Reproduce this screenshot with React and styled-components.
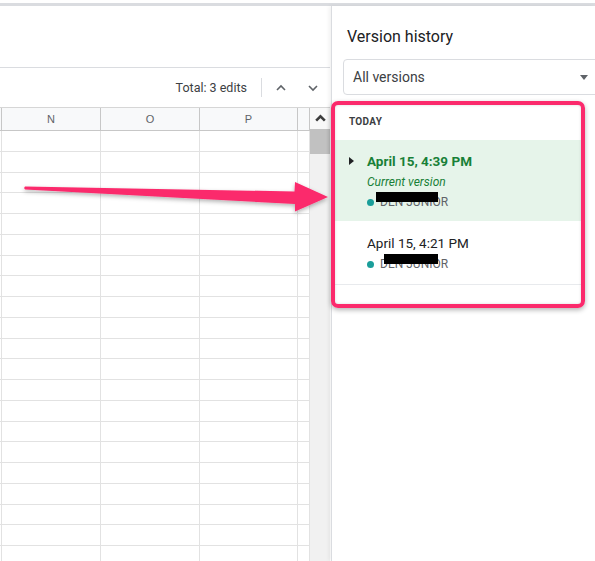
import React from 'react';
import styled, { createGlobalStyle } from 'styled-components';

const GlobalStyle = createGlobalStyle`
  html, body {
    margin: 0;
    padding: 0;
    background: #ffffff;
    font-family: Roboto, "Liberation Sans", Arial, sans-serif;
  }
  * { box-sizing: border-box; }
`;

const versions = [
  { id: 1, date: 'April 15, 4:39 PM', current: true, author: 'DEN JUNIOR', mask: { left: -4, width: 62 } },
  { id: 2, date: 'April 15, 4:21 PM', current: false, author: 'DEN JUNIOR', mask: { left: 4, width: 54 } },
];

const columns = ['', 'N', 'O', 'P', ''];
const ROWS = 21;

const ChevronUp = ({ size = 12, color = '#5f6368', width = 1.6 }) => (
  <svg width={size} height={size} viewBox="0 0 12 12">
    <path d="M2 8 L6 4 L10 8" fill="none" stroke={color} strokeWidth={width} />
  </svg>
);

const ChevronDown = () => (
  <svg width="12" height="12" viewBox="0 0 12 12">
    <path d="M2 4 L6 8 L10 4" fill="none" stroke="#5f6368" strokeWidth="1.6" />
  </svg>
);

const App = () => {
  return (
    <Page>
      <GlobalStyle />
      <TopLine />
      <Main>
        <Sheet>
          <Blank />
          <Toolbar>
            <EditCount>Total: 3 edits</EditCount>
            <Separator />
            <NavButton><ChevronUp /></NavButton>
            <NavButton><ChevronDown /></NavButton>
          </Toolbar>
          <GridArea>
            <Grid>
              {columns.map((c, i) => (
                <HeaderCell key={`h${i}`}>{c}</HeaderCell>
              ))}
              {Array.from({ length: ROWS }).map((_, r) =>
                columns.map((_, i) => <Cell key={`${r}-${i}`} />)
              )}
            </Grid>
            <ScrollTrack>
              <ScrollArrow><ChevronUp size={13} color="#3c3c3c" width={2.4} /></ScrollArrow>
              <ScrollThumb />
            </ScrollTrack>
          </GridArea>
        </Sheet>

        <Panel>
          <Title>Version history</Title>
          <Select>
            <span>All versions</span>
            <Caret />
          </Select>
          <List>
            <DayLabel>TODAY</DayLabel>
            {versions.map(v => (
              <Item key={v.id} $current={v.current}>
                {v.current && <Expander />}
                <DateText $current={v.current}>{v.date}</DateText>
                {v.current && <CurrentTag>Current version</CurrentTag>}
                <Author>
                  <Dot />
                  <AuthorName>
                    {v.author}
                    <Redaction style={{ left: v.mask.left, width: v.mask.width }} />
                  </AuthorName>
                </Author>
              </Item>
            ))}
          </List>
        </Panel>
      </Main>

      <Highlight />
      <Arrow width="595" height="561" viewBox="0 0 595 561">
        <defs>
          <filter id="sh" x="-10%" y="-50%" width="120%" height="200%">
            <feDropShadow dx="0" dy="2" stdDeviation="2" floodColor="#000" floodOpacity="0.3" />
          </filter>
        </defs>
        <path
          d="M25 186.5 Q23.5 188 25 189.5 L295 204 L295 211.5 L328 197 L295 182 L294.5 191.5 Z"
          fill="#fb2a6c"
          filter="url(#sh)"
        />
      </Arrow>
    </Page>
  );
};

const Page = styled.div`
  position: relative;
  width: 595px;
  height: 561px;
  overflow: hidden;
  display: flex;
  flex-direction: column;
  background: #ffffff;
`;

const TopLine = styled.div`
  height: 6px;
  border-top: 3px solid #ffffff;
  background: #dadce0;
  flex-shrink: 0;
`;

const Main = styled.div`
  flex: 1;
  display: flex;
  min-height: 0;
`;

const Sheet = styled.div`
  width: 331px;
  flex-shrink: 0;
  display: flex;
  flex-direction: column;
  padding-right: 1px;
`;

const Blank = styled.div`
  height: 62px;
  border-bottom: 1px solid #dadce0;
  flex-shrink: 0;
`;

const Toolbar = styled.div`
  height: 40px;
  flex-shrink: 0;
  display: flex;
  align-items: center;
  justify-content: flex-end;
  padding-right: 1px;
  border-bottom: 1px solid #d6d6d6;
`;

const EditCount = styled.span`
  font-size: 12.5px;
  color: #3c4043;
  margin-right: 14px;
`;

const Separator = styled.div`
  width: 1px;
  height: 19px;
  background: #dadce0;
  margin-right: 3px;
`;

const NavButton = styled.div`
  width: 32px;
  height: 28px;
  display: flex;
  align-items: center;
  justify-content: center;
`;

const GridArea = styled.div`
  flex: 1;
  display: flex;
  min-height: 0;
  overflow: hidden;
`;

const Grid = styled.div`
  width: 310px;
  display: grid;
  grid-template-columns: 2px 99px 99px 98px 12px;
  grid-auto-rows: 20.75px;
  grid-template-rows: 23px;
  align-content: start;
`;

const HeaderCell = styled.div`
  background: #f8f9fa;
  border-right: 1px solid #c7c7c7;
  border-bottom: 1px solid #c7c7c7;
  display: flex;
  align-items: center;
  justify-content: center;
  font-family: "Liberation Sans", Arial, sans-serif;
  font-size: 11px;
  color: #5f6368;
`;

const Cell = styled.div`
  border-right: 1px solid #e2e2e2;
  border-bottom: 1px solid #e2e2e2;
`;

const ScrollTrack = styled.div`
  width: 20px;
  background: #f1f1f1;
  display: flex;
  flex-direction: column;
`;

const ScrollArrow = styled.div`
  height: 21px;
  display: flex;
  align-items: center;
  justify-content: center;
  background: #f8f8f8;
`;

const ScrollThumb = styled.div`
  height: 25px;
  background: #c1c1c1;
`;

const Panel = styled.div`
  flex: 1;
  position: relative;
  border-left: 1px solid #dadce0;
  box-shadow: -2px 0 4px rgba(0, 0, 0, 0.06);
  padding-top: 19px;
  overflow: hidden;
`;

const Title = styled.div`
  font-size: 16px;
  line-height: 24px;
  color: #202124;
  padding-left: 15px;
`;

const Select = styled.div`
  margin: 10px 0 0 11px;
  width: 258px;
  height: 36px;
  border: 1px solid #dadce0;
  border-radius: 4px;
  display: flex;
  align-items: center;
  justify-content: space-between;
  padding: 0 12px 0 9px;
  font-size: 14px;
  color: #3c4043;
`;

const Caret = styled.span`
  width: 0;
  height: 0;
  border-left: 4px solid transparent;
  border-right: 4px solid transparent;
  border-top: 5px solid #5f6368;
`;

const List = styled.div`
  margin-top: 4px;
  width: 252px;
`;

const DayLabel = styled.div`
  height: 41px;
  display: flex;
  align-items: flex-end;
  padding: 0 0 12px 17px;
  font-size: 10px;
  line-height: 12px;
  font-weight: 700;
  letter-spacing: 0.3px;
  color: #3c4043;
`;

const Item = styled.div`
  position: relative;
  display: flex;
  flex-direction: column;
  gap: 4px;
  padding: ${p => (p.$current ? '12px 0 11px 35px' : '13px 0 12px 35px')};
  background: ${p => (p.$current ? '#e6f4ea' : '#ffffff')};
  border-bottom: ${p => (p.$current ? 'none' : '1px solid #e8eaed')};
`;

const Expander = styled.span`
  position: absolute;
  left: 17px;
  top: 17px;
  width: 0;
  height: 0;
  border-top: 4px solid transparent;
  border-bottom: 4px solid transparent;
  border-left: 5px solid #202124;
`;

const DateText = styled.div`
  font-size: 13.5px;
  line-height: 18px;
  font-weight: ${p => (p.$current ? 700 : 400)};
  color: ${p => (p.$current ? '#188038' : '#202124')};
`;

const CurrentTag = styled.div`
  font-size: 12px;
  line-height: 16px;
  font-style: italic;
  color: #188038;
`;

const Author = styled.div`
  display: flex;
  align-items: center;
  gap: 6px;
  height: 16px;
`;

const Dot = styled.span`
  width: 7px;
  height: 7px;
  border-radius: 50%;
  background: #1a9e9a;
`;

const AuthorName = styled.span`
  position: relative;
  font-size: 12px;
  line-height: 16px;
  color: #5f6368;
`;

const Redaction = styled.span`
  position: absolute;
  top: -2px;
  height: 10px;
  background: #000000;
`;

const Highlight = styled.div`
  position: absolute;
  left: 331px;
  top: 101px;
  width: 254px;
  height: 207px;
  border: 4px solid #fb2a6c;
  border-radius: 7px;
  box-shadow: 0 2px 5px rgba(0, 0, 0, 0.3), inset 0 0 3px rgba(0, 0, 0, 0.15);
  pointer-events: none;
`;

const Arrow = styled.svg`
  position: absolute;
  left: 0;
  top: 0;
  pointer-events: none;
`;

export default App;
